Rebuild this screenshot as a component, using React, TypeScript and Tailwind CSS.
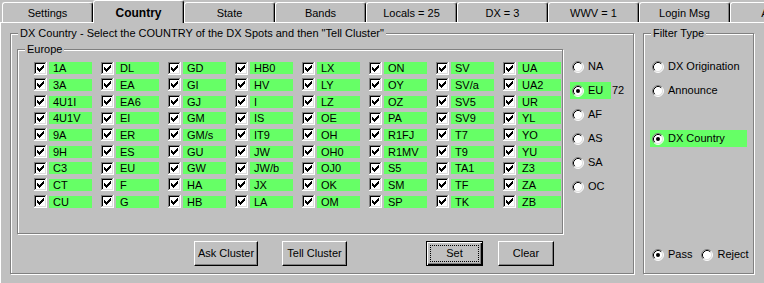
import type { ReactNode } from "react";
import clsx from "clsx";

const tabs = ["Settings", "Country", "State", "Bands", "Locals = 25", "DX = 3", "WWV = 1", "Login Msg", "About"];

// column-major, 9 rows per column
const countries = [
  "1A", "3A", "4U1I", "4U1V", "9A", "9H", "C3", "CT", "CU",
  "DL", "EA", "EA6", "EI", "ER", "ES", "EU", "F", "G",
  "GD", "GI", "GJ", "GM", "GM/s", "GU", "GW", "HA", "HB",
  "HB0", "HV", "I", "IS", "IT9", "JW", "JW/b", "JX", "LA",
  "LX", "LY", "LZ", "OE", "OH", "OH0", "OJ0", "OK", "OM",
  "ON", "OY", "OZ", "PA", "R1FJ", "R1MV", "S5", "SM", "SP",
  "SV", "SV/a", "SV5", "SV9", "T7", "T9", "TA1", "TF", "TK",
  "UA", "UA2", "UR", "YL", "YO", "YU", "Z3", "ZA", "ZB",
];

const continents = ["NA", "EU", "AF", "AS", "SA", "OC"];

// classic 7x7 check mark, offset (3,3)
const checkPixels: [number, number][] = [
  [9, 3], [8, 4], [9, 4], [3, 5], [7, 5], [8, 5], [9, 5],
  [3, 6], [4, 6], [6, 6], [7, 6], [8, 6], [3, 7], [4, 7], [5, 7], [6, 7], [7, 7],
  [4, 8], [5, 8], [6, 8], [5, 9],
];

function CheckBox() {
  return (
    <svg width="13" height="13" viewBox="0 0 13 13" shapeRendering="crispEdges" className="shrink-0">
      <rect x="0" y="0" width="13" height="13" fill="#fff" />
      <rect x="0" y="0" width="12" height="1" fill="#808080" />
      <rect x="0" y="0" width="1" height="12" fill="#808080" />
      <rect x="1" y="1" width="10" height="1" fill="#000" />
      <rect x="1" y="1" width="1" height="10" fill="#000" />
      <rect x="1" y="11" width="11" height="1" fill="#dfdfdf" />
      <rect x="11" y="1" width="1" height="11" fill="#dfdfdf" />
      {checkPixels.map(([x, y]) => (
        <rect key={`${x}-${y}`} x={x} y={y} width="1" height="1" fill="#000" />
      ))}
    </svg>
  );
}

function RadioDot({ checked }: { checked?: boolean }) {
  return (
    <svg width="12" height="12" viewBox="0 0 12 12" className="shrink-0">
      <circle cx="6" cy="6" r="5" fill="#fff" />
      <path d="M2.11 9.89 A5.5 5.5 0 0 1 9.89 2.11" stroke="#808080" fill="none" />
      <path d="M9.89 2.11 A5.5 5.5 0 0 1 2.11 9.89" stroke="#fff" fill="none" />
      <path d="M2.82 9.18 A4.5 4.5 0 0 1 9.18 2.82" stroke="#000" fill="none" />
      <path d="M9.18 2.82 A4.5 4.5 0 0 1 2.82 9.18" stroke="#dfdfdf" fill="none" />
      {checked && <circle cx="6" cy="6" r="2" fill="#000" />}
    </svg>
  );
}

function Radio({ label, checked, green, className }: { label: string; checked?: boolean; green?: boolean; className?: string }) {
  return (
    <div className={clsx("flex h-[17px] items-center pl-[2px]", green && "bg-[#66ff66]", className)}>
      <RadioDot checked={checked} />
      <span className="ml-[4px] leading-[13px]">{label}</span>
    </div>
  );
}

function GroupBox({ title, className, children }: { title: string; className?: string; children?: ReactNode }) {
  return (
    <div className={clsx("shrink-0 border border-[#808080] shadow-[inset_1px_1px_#fff,1px_1px_#fff]", className)}>
      <div className="-mt-[7px] ml-[7px] w-fit bg-[#c0c0c0] px-[2px] leading-[13px]">{title}</div>
      {children}
    </div>
  );
}

function Button({ label, width, isDefault }: { label: string; width: string; isDefault?: boolean }) {
  if (isDefault) {
    return (
      <button
        className={clsx(
          "flex h-[25px] shrink-0 border border-black bg-[#c0c0c0] p-[3px] shadow-[inset_1px_1px_#fff,inset_-1px_-1px_#000,inset_-2px_-2px_#808080]",
          width
        )}
      >
        <span className="flex h-full flex-1 items-center justify-center border border-dotted border-black leading-[13px]">{label}</span>
      </button>
    );
  }
  return (
    <button
      className={clsx(
        "flex h-[25px] shrink-0 items-center justify-center border border-t-white border-l-white border-r-black border-b-black bg-[#c0c0c0] leading-[13px] shadow-[inset_-1px_-1px_#808080]",
        width
      )}
    >
      {label}
    </button>
  );
}

export default function App() {
  return (
    <div className="flex h-[283px] w-[764px] flex-col overflow-hidden bg-[#c0c0c0] font-['Liberation_Sans',Arial,sans-serif] text-[11px] text-black">
      {/* Tabs */}
      <div className="relative z-10 flex h-[22px] shrink-0 items-end pl-[2px]">
        {tabs.map((tab) =>
          tab === "Country" ? (
            <div
              key={tab}
              className="-mb-px h-[23px] w-[91px] shrink-0 rounded-t-[3px] border-l border-r border-t border-l-white border-r-black border-t-white bg-[#c0c0c0] text-center text-[12px] font-bold leading-[24px] shadow-[inset_-1px_0_#808080]"
            >
              {tab}
            </div>
          ) : (
            <div
              key={tab}
              className="h-[20px] w-[91px] shrink-0 rounded-t-[3px] border-l border-r border-t border-l-white border-r-black border-t-white text-center leading-[20px] shadow-[inset_-1px_0_#808080]"
            >
              {tab}
            </div>
          )
        )}
      </div>

      {/* Panel */}
      <div className="flex flex-1 border-l border-t border-white">
        <GroupBox
          title={'DX Country - Select the COUNTRY of the DX Spots and then "Tell Cluster"'}
          className="ml-[9px] mt-[10px] h-[241px] w-[624px]"
        >
          <div className="ml-[6px] mt-[9px] flex items-start">
            <GroupBox title="Europe" className="h-[185px] w-[546px]">
              <div className="ml-[16px] mt-[4px] grid grid-flow-col grid-cols-[repeat(8,67px)] grid-rows-[repeat(9,16.67px)]">
                {countries.map((c) => (
                  <div key={c} className="flex items-center">
                    <CheckBox />
                    <span className="ml-[2px] h-[12px] w-[43px] bg-[#66ff66] pl-[4px] leading-[12px]">{c}</span>
                  </div>
                ))}
              </div>
            </GroupBox>
            <div className="ml-[7px] mt-[9px] flex flex-col gap-[7px]">
              {continents.map((c) =>
                c === "EU" ? (
                  <div key={c} className="flex items-center">
                    <Radio label={c} checked green className="w-[41px]" />
                    <span className="ml-[1px] leading-[13px]">72</span>
                  </div>
                ) : (
                  <Radio key={c} label={c} />
                )
              )}
            </div>
          </div>
          <div className="ml-[183px] mt-[7px] flex">
            <Button label="Ask Cluster" width="w-[64px]" />
            <div className="ml-[24px]">
              <Button label="Tell Cluster" width="w-[65px]" />
            </div>
            <div className="ml-[79px]">
              <Button label="Set" width="w-[57px]" isDefault />
            </div>
            <div className="ml-[15px]">
              <Button label="Clear" width="w-[56px]" />
            </div>
          </div>
        </GroupBox>

        <GroupBox title="Filter Type" className="ml-[9px] mt-[10px] h-[241px] w-[111px]">
          <div className="ml-[6px] flex flex-col">
            <Radio label="DX Origination" className="mt-[18px]" />
            <Radio label="Announce" className="mt-[7px]" />
            <Radio label="DX Country" checked green className="mt-[31px] w-[97px]" />
            <div className="mt-[99px] flex items-center">
              <Radio label="Pass" checked />
              <Radio label="Reject" className="ml-[7px] pl-0" />
            </div>
          </div>
        </GroupBox>
      </div>
    </div>
  );
}
